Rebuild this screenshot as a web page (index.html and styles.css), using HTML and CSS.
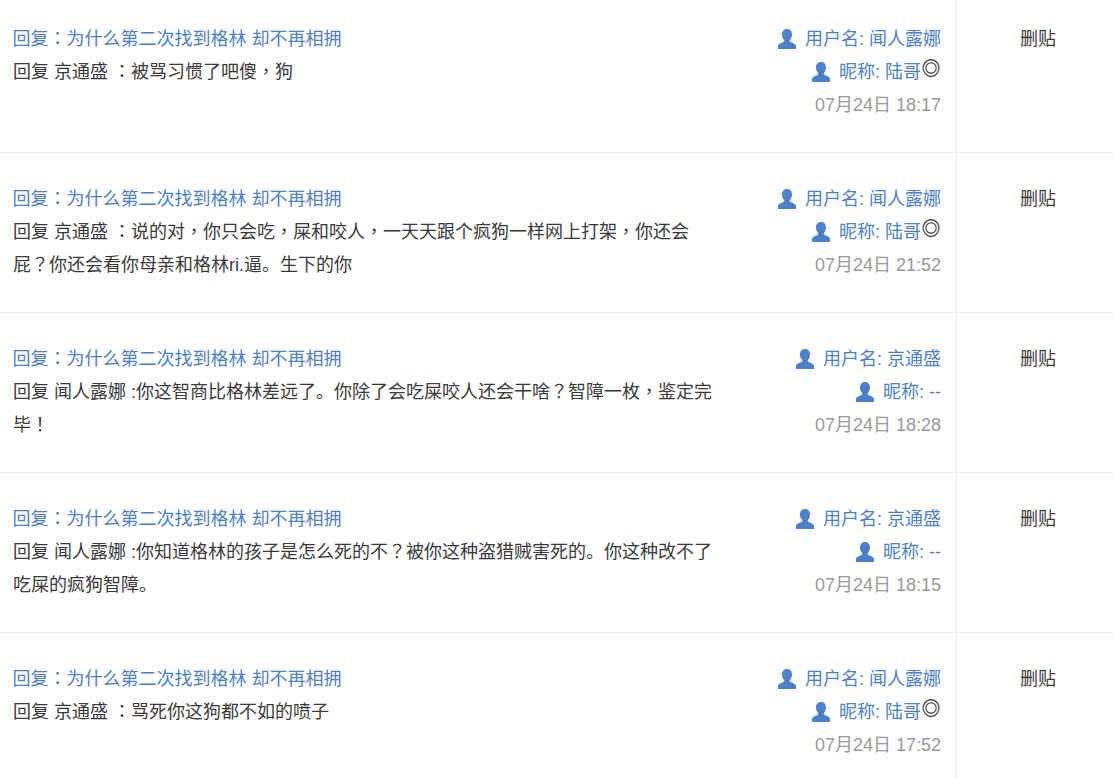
FILE: index.html
```html
<!DOCTYPE html>
<html lang="zh-CN">
<head>
<meta charset="utf-8">
<title>回复</title>
<link rel="stylesheet" href="styles.css">
</head>
<body>
<svg class="defs" width="0" height="0"><symbol id="user" viewBox="0 0 18 20"><path d="M9 0C5.800 0 4 2.200 4 5.500 4 8 5 10 6.200 11V12.600C4 14 .8 14.500 0 17V20H18V17C17.200 14.500 14 14 11.800 12.600V11C13 10 14 8 14 5.500 14 2.200 12.200 0 9 0Z"/></symbol></svg>
<main class="list">
  <article class="row">
    <div class="main">
      <a class="title">回复<span class="p" lang="zh-TW">：</span>为什么第二次找到格林 却不再相拥</a>
      <p class="body">回复 京通盛 <span class="p" lang="zh-TW">：</span>被骂习惯了吧傻<span class="p" lang="zh-TW">，</span>狗</p>
    </div>
    <div class="meta">
      <div class="who"><svg class="ico"><use href="#user"/></svg><span>用户名: 闻人露娜</span></div>
      <div class="who"><svg class="ico"><use href="#user"/></svg><span>昵称: 陆哥</span><sup class="mark">◎</sup></div>
      <div class="time">07月24日 18:17</div>
    </div>
    <div class="act">删贴</div>
  </article>
  <article class="row">
    <div class="main">
      <a class="title">回复<span class="p" lang="zh-TW">：</span>为什么第二次找到格林 却不再相拥</a>
      <p class="body">回复 京通盛 <span class="p" lang="zh-TW">：</span>说的对<span class="p" lang="zh-TW">，</span>你只会吃<span class="p" lang="zh-TW">，</span>屎和咬人<span class="p" lang="zh-TW">，</span>一天天跟个疯狗一样网上打架<span class="p" lang="zh-TW">，</span>你还会屁<span class="p" lang="zh-TW">？</span>你还会看你母亲和格林ri.逼。生下的你</p>
    </div>
    <div class="meta">
      <div class="who"><svg class="ico"><use href="#user"/></svg><span>用户名: 闻人露娜</span></div>
      <div class="who"><svg class="ico"><use href="#user"/></svg><span>昵称: 陆哥</span><sup class="mark">◎</sup></div>
      <div class="time">07月24日 21:52</div>
    </div>
    <div class="act">删贴</div>
  </article>
  <article class="row">
    <div class="main">
      <a class="title">回复<span class="p" lang="zh-TW">：</span>为什么第二次找到格林 却不再相拥</a>
      <p class="body">回复 闻人露娜 :你这智商比格林差远了。你除了会吃屎咬人还会干啥<span class="p" lang="zh-TW">？</span>智障一枚<span class="p" lang="zh-TW">，</span>鉴定完毕<span class="p" lang="zh-TW">！</span></p>
    </div>
    <div class="meta">
      <div class="who"><svg class="ico"><use href="#user"/></svg><span>用户名: 京通盛</span></div>
      <div class="who"><svg class="ico"><use href="#user"/></svg><span>昵称: --</span></div>
      <div class="time">07月24日 18:28</div>
    </div>
    <div class="act">删贴</div>
  </article>
  <article class="row">
    <div class="main">
      <a class="title">回复<span class="p" lang="zh-TW">：</span>为什么第二次找到格林 却不再相拥</a>
      <p class="body">回复 闻人露娜 :你知道格林的孩子是怎么死的不<span class="p" lang="zh-TW">？</span>被你这种盗猎贼害死的。你这种改不了吃屎的疯狗智障。</p>
    </div>
    <div class="meta">
      <div class="who"><svg class="ico"><use href="#user"/></svg><span>用户名: 京通盛</span></div>
      <div class="who"><svg class="ico"><use href="#user"/></svg><span>昵称: --</span></div>
      <div class="time">07月24日 18:15</div>
    </div>
    <div class="act">删贴</div>
  </article>
  <article class="row">
    <div class="main">
      <a class="title">回复<span class="p" lang="zh-TW">：</span>为什么第二次找到格林 却不再相拥</a>
      <p class="body">回复 京通盛 <span class="p" lang="zh-TW">：</span>骂死你这狗都不如的喷子</p>
    </div>
    <div class="meta">
      <div class="who"><svg class="ico"><use href="#user"/></svg><span>用户名: 闻人露娜</span></div>
      <div class="who"><svg class="ico"><use href="#user"/></svg><span>昵称: 陆哥</span><sup class="mark">◎</sup></div>
      <div class="time">07月24日 17:52</div>
    </div>
    <div class="act">删贴</div>
  </article>
</main>
</body>
</html>
```
FILE: styles.css
```css
html, body { margin: 0; padding: 0; height: 100%; overflow: hidden; background: #fff; }
body {
  font-family: "Liberation Sans", "Noto Sans CJK SC", sans-serif;
  font-size: 18px;
  line-height: 33px;
  color: #3a3a3a;
}
.defs { display: block; height: 0; }
.list { margin-top: -7px; }
.row {
  display: grid;
  grid-template-columns: 716px 240px 1fr;
  height: 160px;
  box-sizing: border-box;
  border-bottom: 1px solid #eee;
}
.p { font-family: "Noto Sans CJK TC", sans-serif; line-height: 0; }
.main { padding: 30px 0 0 13px; }
.title { display: block; color: #4a7fcb; margin-left: -0.5px; }
.body { margin: 0; width: 702px; }
.meta { padding: 30px 15px 0 0; text-align: right; border-right: 1px solid #eee; box-sizing: border-box; width: 241px; }
.who { color: #4a7fcb; display: flex; justify-content: flex-end; align-items: center; }
.ico { width: 18px; height: 20px; margin: 0 9px 1px 0; fill: #4a80cc; }
.mark { font-size: 18px; line-height: 1; color: #222; -webkit-text-stroke: 0.3px #222; align-self: flex-start; margin: 4px 1px 0 1px; }
.time { color: #999; }
.act { padding: 30px 0 0 7px; text-align: center; }
```
